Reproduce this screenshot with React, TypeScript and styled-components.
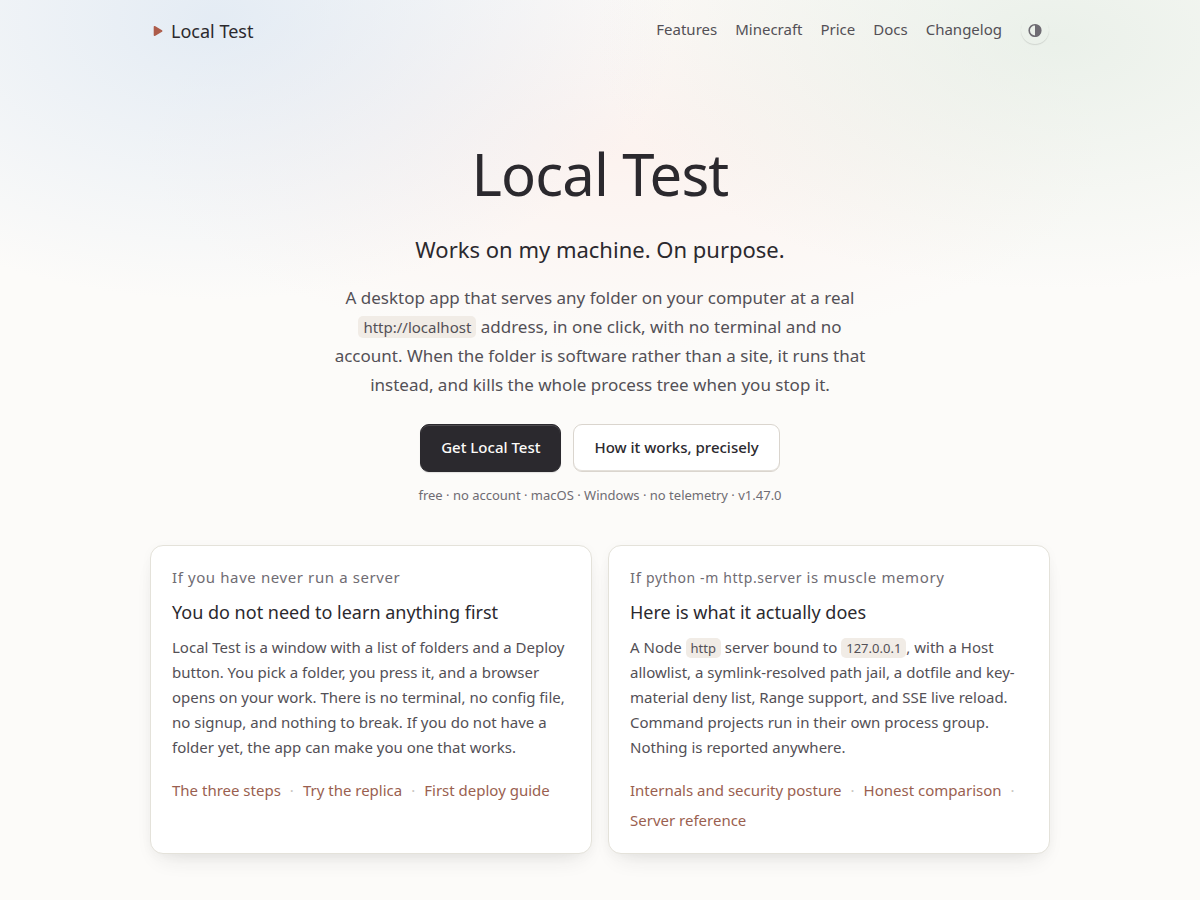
import React from "react";
import styled, { createGlobalStyle } from "styled-components";

const ink = "#2b292e";
const soft = "#535056";
const muted = "#6f6c73";
const accent = "#9a5f50";

const GlobalStyle = createGlobalStyle`
  *, *::before, *::after { box-sizing: border-box; }
  body {
    margin: 0;
    color: ${soft};
    font-family: "Noto Sans", "Open Sans", sans-serif;
    font-size: 15px;
    line-height: 25px;
    background-color: #fcfbf9;
  }
  h1, h2, p { margin: 0; font-weight: 400; }
  a { text-decoration: none; }
`;

const Page = styled.div`
  min-height: 100vh;
  padding: 0 24px 46px;
  background-image:
    radial-gradient(460px 280px at 18% 20px, rgba(208, 223, 240, 0.55), rgba(208, 223, 240, 0)),
    radial-gradient(460px 250px at 88% 40px, rgba(220, 232, 221, 0.55), rgba(220, 232, 221, 0)),
    radial-gradient(480px 200px at 52% 150px, rgba(252, 232, 227, 0.45), rgba(252, 232, 227, 0));
  background-repeat: no-repeat;
`;

const Container = styled.div`
  max-width: 900px;
  margin: 0 auto;
`;

const Header = styled.header`
  display: flex;
  align-items: center;
  justify-content: space-between;
  height: 60px;
`;

const Brand = styled.a`
  display: flex;
  align-items: center;
  gap: 8px;
  padding: 2px 0 0 3px;
  color: ${ink};
  font-size: 18px;
`;

const Nav = styled.nav`
  display: flex;
  align-items: center;
  gap: 18px;
  padding-right: 1px;
`;

const NavLink = styled.a`
  padding-bottom: 2px;
  color: ${soft};
`;

const ThemeButton = styled.button`
  display: grid;
  place-items: center;
  width: 28px;
  height: 28px;
  margin-left: 1px;
  padding: 0;
  border: 0;
  border-radius: 50%;
  color: ${muted};
  background: transparent;
  box-shadow: 0 1px 1px rgba(43, 41, 46, 0.14);
`;

const Hero = styled.section`
  display: flex;
  flex-direction: column;
  align-items: center;
  padding-top: 80px;
  text-align: center;
`;

const Title = styled.h1`
  color: ${ink};
  font-size: 58px;
  line-height: 68px;
  letter-spacing: -0.015em;
`;

const Tagline = styled.p`
  margin-top: 25px;
  color: ${ink};
  font-size: 22px;
  line-height: 32px;
`;

const Lead = styled.p`
  max-width: 544px;
  margin-top: 18px;
  font-size: 17px;
  line-height: 29px;
`;

const Code = styled.code<{ $large?: boolean }>`
  padding: 1px 5px;
  border-radius: 5px;
  background: #f1ece6;
  font-family: inherit;
  font-size: ${(p) => (p.$large ? 15 : 13)}px;
  line-height: 1;
`;

const Actions = styled.div`
  display: flex;
  flex-wrap: wrap;
  justify-content: center;
  gap: 12px;
  margin-top: 25px;
`;

const Action = styled.a<{ $primary?: boolean }>`
  display: inline-flex;
  align-items: center;
  height: 48px;
  padding: 0 20px 2px;
  border: 1px solid ${(p) => (p.$primary ? ink : "#dad5ce")};
  border-radius: 9px;
  color: ${(p) => (p.$primary ? "#fcfbf9" : ink)};
  background: ${(p) => (p.$primary ? ink : "#ffffff")};
  box-shadow: ${(p) =>
    p.$primary
      ? "inset 0 1px 0 rgba(255, 255, 255, 0.16), 0 1px 1px rgba(43, 41, 46, 0.12)"
      : "inset 0 -1px 0 #e4e0da"};
  font-weight: 500;
`;

const Facts = styled.p`
  margin-top: 13px;
  color: ${muted};
  font-size: 13px;
  line-height: 20px;
`;

const Cards = styled.section`
  display: grid;
  grid-template-columns: repeat(auto-fit, minmax(320px, 1fr));
  gap: 16px;
  margin-top: 40px;
`;

const Card = styled.article`
  padding: 20px 21px 18px;
  border: 1px solid #e4e2da;
  border-radius: 13px;
  background: #ffffff;
  box-shadow: 0 12px 24px -12px rgba(43, 41, 46, 0.16), 0 2px 12px rgba(43, 41, 46, 0.03);
`;

const Eyebrow = styled.p`
  color: ${muted};
  line-height: 22px;
  letter-spacing: 0.04em;
`;

const Command = styled.code`
  font-family: inherit;
  font-size: 14px;
  line-height: 1;
`;

const CardTitle = styled.h2`
  margin-top: 10px;
  color: ${ink};
  font-size: 18px;
  line-height: 28px;
`;

const CardText = styled.p`
  margin-top: 9px;
`;

const LinkList = styled.ul`
  display: flex;
  flex-wrap: wrap;
  margin: 15px 0 0;
  padding: 0;
  list-style: none;
  line-height: 30px;
`;

const LinkItem = styled.li`
  &:not(:last-child)::after {
    content: "·";
    margin: 0 9px;
    color: #c9c5bf;
  }
`;

const CardLink = styled.a`
  color: ${accent};
`;

const Links = ({ items }: { items: string[] }) => (
  <LinkList>
    {items.map((item) => (
      <LinkItem key={item}>
        <CardLink href="#">{item}</CardLink>
      </LinkItem>
    ))}
  </LinkList>
);

const PlayMark = () => (
  <svg width="10" height="12" viewBox="0 0 10 12" aria-hidden="true">
    <path d="M1.5 1.8 8.6 6 1.5 10.2Z" fill="#ad5c4a" stroke="#ad5c4a" strokeWidth="1.6" strokeLinejoin="round" />
  </svg>
);

const ContrastIcon = () => (
  <svg width="14" height="14" viewBox="0 0 14 14" aria-hidden="true">
    <circle cx="7" cy="7.5" r="5.8" fill="none" stroke="currentColor" strokeWidth="1.6" />
    <path d="M7 1.5a6 6 0 0 1 0 12Z" fill="currentColor" />
  </svg>
);

const navItems = ["Features", "Minecraft", "Price", "Docs", "Changelog"];

export default function App() {
  return (
    <>
      <GlobalStyle />
      <Page>
        <Container>
          <Header>
            <Brand href="#">
              <PlayMark />
              Local Test
            </Brand>
            <Nav>
              {navItems.map((item) => (
                <NavLink href="#" key={item}>
                  {item}
                </NavLink>
              ))}
              <ThemeButton type="button" aria-label="Toggle theme">
                <ContrastIcon />
              </ThemeButton>
            </Nav>
          </Header>
          <main>
            <Hero>
              <Title>Local Test</Title>
              <Tagline>Works on my machine. On purpose.</Tagline>
              <Lead>
                A desktop app that serves any folder on your computer at a real{" "}
                <Code $large>http://localhost</Code> address, in one click, with no terminal and no account. When
                the folder is software rather than a site, it runs that instead, and kills the whole process tree
                when you stop it.
              </Lead>
              <Actions>
                <Action href="#" $primary>
                  Get Local Test
                </Action>
                <Action href="#">How it works, precisely</Action>
              </Actions>
              <Facts>free · no account · macOS · Windows · no telemetry · v1.47.0</Facts>
            </Hero>
            <Cards>
              <Card>
                <Eyebrow>If you have never run a server</Eyebrow>
                <CardTitle>You do not need to learn anything first</CardTitle>
                <CardText>
                  Local Test is a window with a list of folders and a Deploy button. You pick a folder, you press
                  it, and a browser opens on your work. There is no terminal, no config file, no signup, and
                  nothing to break. If you do not have a folder yet, the app can make you one that works.
                </CardText>
                <Links items={["The three steps", "Try the replica", "First deploy guide"]} />
              </Card>
              <Card>
                <Eyebrow>
                  If <Command>python -m http.server</Command> is muscle memory
                </Eyebrow>
                <CardTitle>Here is what it actually does</CardTitle>
                <CardText>
                  A Node <Code>http</Code> server bound to <Code>127.0.0.1</Code>, with a Host allowlist, a
                  symlink-resolved path jail, a dotfile and key-material deny list, Range support, and SSE live
                  reload. Command projects run in their own process group. Nothing is reported anywhere.
                </CardText>
                <Links items={["Internals and security posture", "Honest comparison", "Server reference"]} />
              </Card>
            </Cards>
          </main>
        </Container>
      </Page>
    </>
  );
}
